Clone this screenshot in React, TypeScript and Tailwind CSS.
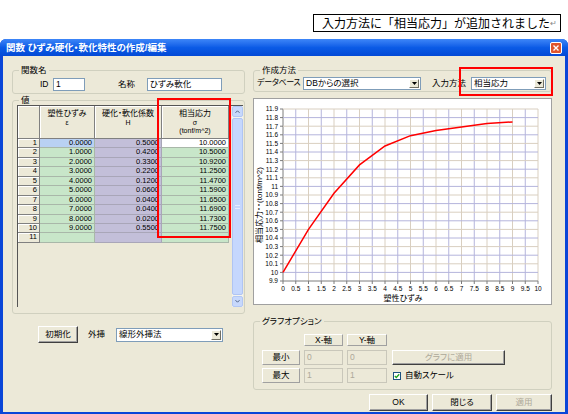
import React from "react";

// Dialog: 関数 ひずみ硬化・軟化特性の作成/編集 (XP style, scaled down)

const UI = "font-['Liberation_Sans','Noto_Sans_CJK_JP',sans-serif] [font-feature-settings:'palt']";

const rows: [string, string, string][] = [
  ["0.0000", "0.5000", "10.0000"],
  ["1.0000", "0.4200", "10.5000"],
  ["2.0000", "0.3300", "10.9200"],
  ["3.0000", "0.2200", "11.2500"],
  ["4.0000", "0.1200", "11.4700"],
  ["5.0000", "0.0600", "11.5900"],
  ["6.0000", "0.0400", "11.6500"],
  ["7.0000", "0.0400", "11.6900"],
  ["8.0000", "0.0200", "11.7300"],
  ["9.0000", "0.5500", "11.7500"],
  ["", "", ""],
];

function GroupBox({ title, className, children }: { title: string; className?: string; children: React.ReactNode }) {
  return (
    <fieldset className={`border border-[#D0D0BF] rounded-[3px] ${className ?? ""}`}>
      <legend className="ml-[6px] px-[2px] text-[8.5px] leading-[10px]">{title}</legend>
      {children}
    </fieldset>
  );
}

function DownTri() {
  return (
    <svg width="5" height="3" viewBox="0 0 5 3">
      <path d="M0 0H5L2.5 3Z" fill="#000" />
    </svg>
  );
}

function Combo({ value, className }: { value: string; className: string }) {
  return (
    <div className={`flex h-[13px] border border-[#7F9DB9] bg-white ${className}`}>
      <span className="flex-1 pl-[2px] text-[8.5px] leading-[11px] truncate">{value}</span>
      <span className="w-[10px] m-[1px] flex items-center justify-center bg-[#ECE9D8] border border-t-white border-l-white border-r-[#716F64] border-b-[#716F64]">
        <DownTri />
      </span>
    </div>
  );
}

function TextBox({ value, className }: { value: string; className: string }) {
  return (
    <div className={`h-[13px] border border-[#7F9DB9] bg-white pl-[2px] text-[8.5px] leading-[11px] ${className}`}>
      {value}
    </div>
  );
}

function Btn({ label, disabled, className }: { label: string; disabled?: boolean; className: string }) {
  return (
    <div
      className={`flex items-center justify-center bg-[#ECE9D8] border border-t-white border-l-white border-r-[#404040] border-b-[#404040] shadow-[inset_-1px_-1px_0_#A0A0A0] text-[8.5px] whitespace-nowrap ${
        disabled ? "text-[#ACA899]" : "text-black"
      } ${className}`}
    >
      {label}
    </div>
  );
}

function ValueGrid() {
  return (
    <div className="flex w-[226px] h-[202px] ml-[4px]">
      <div className="flex-1 flex flex-col border-l border-t border-[#555] bg-[#ECE9D8]">
        {/* header */}
        <div className="flex h-[33px] text-[8px] leading-[8.5px]">
          <div className="w-[22px] border-r border-b border-[#808080] shadow-[inset_1px_1px_0_#fff]" />
          <div className="w-[55px] flex flex-col items-center pt-[4px] border-r border-b border-[#808080] shadow-[inset_1px_1px_0_#fff]">
            <span>塑性ひずみ</span>
            <span className="text-[7px]">ε</span>
          </div>
          <div className="w-[67px] flex flex-col items-center pt-[4px] border-r border-b border-[#808080] shadow-[inset_1px_1px_0_#fff]">
            <span>硬化・軟化係数</span>
            <span className="text-[7px]">H</span>
          </div>
          <div className="w-[67px] flex flex-col items-center pt-[4px] border-r border-b border-[#808080] shadow-[inset_1px_1px_0_#fff]">
            <span>相当応力</span>
            <span className="text-[7px]">σ</span>
            <span className="text-[7px]">(tonf/m^2)</span>
          </div>
        </div>
        {rows.map((r, i) => (
          <div key={i} className="flex h-[9.45px] text-[7.5px] leading-[8.45px]">
            <div className="w-[22px] text-right pr-[2px] border-r border-b border-[#808080] shadow-[inset_1px_1px_0_#fff]">
              {i + 1}
            </div>
            <div
              className={`w-[55px] text-right pr-[2px] border-r border-b border-[#A9B7A9] ${
                i === 0 ? "bg-[#B9D1F3]" : "bg-[#C8E6C9]"
              }`}
            >
              {r[0]}
            </div>
            <div className="w-[67px] text-right pr-[2px] border-r border-b border-[#A9A6B8] bg-[#C3BFD9]">{r[1]}</div>
            <div
              className={`w-[67px] text-right pr-[2px] border-r border-b border-[#A9B7A9] ${
                i === 0 ? "bg-white" : "bg-[#C8E6C9]"
              }`}
            >
              {r[2]}
            </div>
          </div>
        ))}
      </div>
      {/* scrollbar */}
      <div className="w-[11px] flex flex-col bg-[#F3F3EE] border-t border-[#555]">
        <div className="h-[11px] flex items-center justify-center rounded-[2px] border border-[#B2C7F4] bg-[#C7D8FC]">
          <svg width="5" height="3" viewBox="0 0 5 3">
            <path d="M0.5 2.8L2.5 0.8L4.5 2.8" stroke="#4D6185" strokeWidth="1" fill="none" />
          </svg>
        </div>
        <div className="flex-1 my-[1px] flex items-center justify-center rounded-[2px] border border-[#AFC4F3] bg-[#C5D7FD]">
          <div className="w-[5px] h-[4px] border-y border-[#E6EEFF]" />
        </div>
        <div className="h-[11px] flex items-center justify-center rounded-[2px] border border-[#B2C7F4] bg-[#C7D8FC]">
          <svg width="5" height="3" viewBox="0 0 5 3">
            <path d="M0.5 0.2L2.5 2.2L4.5 0.2" stroke="#4D6185" strokeWidth="1" fill="none" />
          </svg>
        </div>
      </div>
    </div>
  );
}

const X0 = 29;
const XS = 25.5;
const Y0 = 182;
const YS = 86;
const px = (v: number) => X0 + v * XS;
const py = (v: number) => Y0 - (v - 9.9) * YS;

const curve: [number, number][] = [
  [0, 10], [1, 10.5], [2, 10.92], [3, 11.25], [4, 11.47],
  [5, 11.59], [6, 11.65], [7, 11.69], [8, 11.73], [9, 11.75],
];

function Chart() {
  const vx = Array.from({ length: 21 }, (_, i) => i);
  const hy = Array.from({ length: 21 }, (_, i) => i);
  const yLabel = (i: number) => {
    const v = Math.round((9.9 + i * 0.1) * 10) / 10;
    return String(v);
  };
  return (
    <div className="w-[299px] h-[207px] mt-[6px] bg-white border border-[#A0A0A0]">
      <svg width="297" height="205" viewBox="0 0 297 205" fontFamily="Liberation Sans, Noto Sans CJK JP, sans-serif">
        {vx.map((i) => (
          <line
            key={"v" + i}
            x1={X0 + i * 12.75}
            x2={X0 + i * 12.75}
            y1={py(11.9)}
            y2={Y0}
            stroke={i === 0 ? "#7C7C7C" : i % 2 ? "#B4B4DC" : "#D9CFC0"}
            strokeWidth="1"
          />
        ))}
        {hy.map((i) => (
          <line
            key={"h" + i}
            x1={X0}
            x2={px(10)}
            y1={Y0 - i * 8.6}
            y2={Y0 - i * 8.6}
            stroke={i === 0 ? "#7C7C7C" : i % 2 ? "#B4B4DC" : "#D9CFC0"}
            strokeWidth="1"
          />
        ))}
        {hy.map((i) => (
          <g key={"yl" + i}>
            <line x1={X0 - 3} x2={X0} y1={Y0 - i * 8.6} y2={Y0 - i * 8.6} stroke="#7C7C7C" />
            <text x={X0 - 5} y={Y0 - i * 8.6 + 2.3} fontSize="6.5" textAnchor="end" fill="#000">
              {yLabel(i)}
            </text>
          </g>
        ))}
        {vx.map((i) => (
          <g key={"xl" + i}>
            <line x1={X0 + i * 12.75} x2={X0 + i * 12.75} y1={Y0} y2={Y0 + 3} stroke="#7C7C7C" />
            <text x={X0 + i * 12.75} y={Y0 + 10} fontSize="6.5" textAnchor="middle" fill="#000">
              {String(i / 2)}
            </text>
          </g>
        ))}
        <polyline
          points={curve.map(([x, y]) => `${px(x)},${py(y)}`).join(" ")}
          fill="none"
          stroke="#FF0000"
          strokeWidth="1.5"
        />
        <text x={149} y={202} fontSize="8" textAnchor="middle" fill="#000" style={{ fontFeatureSettings: "'palt'" }}>
          塑性ひずみ
        </text>
        <text
          x={0}
          y={0}
          fontSize="8"
          textAnchor="middle"
          fill="#000"
          transform="translate(8 106) rotate(-90)"
        >
          相当応力・・(tonf/m^2)
        </text>
      </svg>
    </div>
  );
}

export default function App() {
  return (
    <div className={`relative w-[568px] h-[414px] bg-white overflow-hidden text-black ${UI}`}>
      {/* note added on the screenshot */}
      <div className="h-[39px] pt-[14px] pl-[313px]">
        <div className="w-[248px] h-[18px] border border-black flex items-center pl-[8px] text-[12px] leading-none font-['Noto_Sans_CJK_JP',sans-serif] [font-feature-settings:normal]">
          入力方法に「相当応力」が追加されました<span className="text-[8px] text-[#888]">↵</span>
        </div>
      </div>

      {/* dialog */}
      <div className="h-[375px] flex flex-col rounded-t-[6px] bg-[#0A46D8] overflow-hidden">
        <div className="h-[17px] flex items-center justify-between bg-gradient-to-b from-[#3D86F8] via-[#0B5BE6] to-[#0449D6]">
          <span className="pl-[6px] text-[9.5px] font-bold text-white leading-none">
            関数 ひずみ硬化・軟化特性の作成/編集
          </span>
          <span className="mr-[6px] w-[12px] h-[12px] flex items-center justify-center rounded-[2px] border border-white bg-[#E0552C]">
            <svg width="6" height="6" viewBox="0 0 6 6">
              <path d="M0.5 0.5L5.5 5.5M5.5 0.5L0.5 5.5" stroke="#fff" strokeWidth="1.4" />
            </svg>
          </span>
        </div>

        <div className="flex-1 mx-[3px] mb-[2px] bg-[#ECE9D8] flex px-[9px] gap-[8px]">
          {/* left column */}
          <div className="w-[233px] flex flex-col">
            <GroupBox title="関数名" className="mt-[9px]">
              <div className="h-[18px] flex items-center pl-[27px] text-[8.5px] whitespace-nowrap">
                <span className="w-[13px]">ID</span>
                <TextBox value="1" className="w-[32px]" />
                <span className="ml-[33px] w-[29px]">名称</span>
                <TextBox value="ひずみ軟化" className="w-[75px]" />
              </div>
            </GroupBox>
            <GroupBox title="値" className="mt-[1px] pb-[6px]">
              <ValueGrid />
            </GroupBox>
            <div className="mt-[12px] h-[17px] flex items-center text-[8.5px] whitespace-nowrap">
              <Btn label="初期化" className="ml-[26px] w-[40px] h-[17px]" />
              <span className="ml-[10px] w-[28px]">外挿</span>
              <Combo value="線形外挿法" className="w-[107px] h-[14px]" />
            </div>
          </div>

          {/* right column */}
          <div className="w-[299px] flex flex-col">
            <GroupBox title="作成方法" className="mt-[9px]">
              <div className="h-[16px] flex items-center pl-[3px] text-[8.5px] whitespace-nowrap">
                <span className="w-[46px] shrink-0 text-[8px] tracking-[-0.3px]">データベース</span>
                <Combo value="DBからの選択" className="w-[118px] shrink-0" />
                <span className="ml-[11px] w-[39px] shrink-0">入力方法</span>
                <Combo value="相当応力" className="w-[75px] shrink-0" />
              </div>
            </GroupBox>

            <Chart />

            <GroupBox title="グラフオプション" className="mt-[11px]">
              <div className="pt-[8px] pb-[6px] pl-[8px] grid grid-cols-[38px_39px_40px_114px] grid-rows-[12px_15px_15px] gap-x-[4px] gap-y-[3.5px] text-[8.5px] whitespace-nowrap">
                <div />
                <div className="flex items-center justify-center border border-t-white border-l-white border-r-[#A0A0A0] border-b-[#A0A0A0]">X-軸</div>
                <div className="flex items-center justify-center border border-t-white border-l-white border-r-[#A0A0A0] border-b-[#A0A0A0]">Y-軸</div>
                <div />
                <div className="flex items-center justify-center border border-t-white border-l-white border-r-[#A0A0A0] border-b-[#A0A0A0]">最小</div>
                <div className="border border-[#C9C7BA] pl-[2px] text-[#ACA899] leading-[12px]">0</div>
                <div className="border border-[#C9C7BA] pl-[2px] text-[#ACA899] leading-[12px]">0</div>
                <Btn label="グラフに適用" disabled className="ml-[1px]" />
                <div className="flex items-center justify-center border border-t-white border-l-white border-r-[#A0A0A0] border-b-[#A0A0A0]">最大</div>
                <div className="border border-[#C9C7BA] pl-[2px] text-[#ACA899] leading-[12px]">1</div>
                <div className="border border-[#C9C7BA] pl-[2px] text-[#ACA899] leading-[12px]">1</div>
                <div className="flex items-center ml-[2px] gap-[4px]">
                  <span className="w-[8px] h-[8px] border border-[#1C5180] bg-white flex items-center justify-center">
                    <svg width="6" height="6" viewBox="0 0 6 6">
                      <path d="M0.8 3L2.3 4.5L5.2 1.2" stroke="#21A121" strokeWidth="1.3" fill="none" />
                    </svg>
                  </span>
                  <span>自動スケール</span>
                </div>
              </div>
            </GroupBox>

            <div className="mt-[4px] h-[17px] flex justify-end gap-[4px]">
              <Btn label="OK" className="w-[59px]" />
              <Btn label="閉じる" className="w-[60px]" />
              <Btn label="適用" disabled className="w-[56px]" />
            </div>
          </div>
        </div>
      </div>

      {/* red annotation frames */}
      <div className="absolute left-[157px] top-[98px] w-[74px] h-[140px] border-2 border-[#FF0000]" />
      <div className="absolute left-[459px] top-[67px] w-[94px] h-[29px] border-2 border-[#FF0000]" />
    </div>
  );
}
